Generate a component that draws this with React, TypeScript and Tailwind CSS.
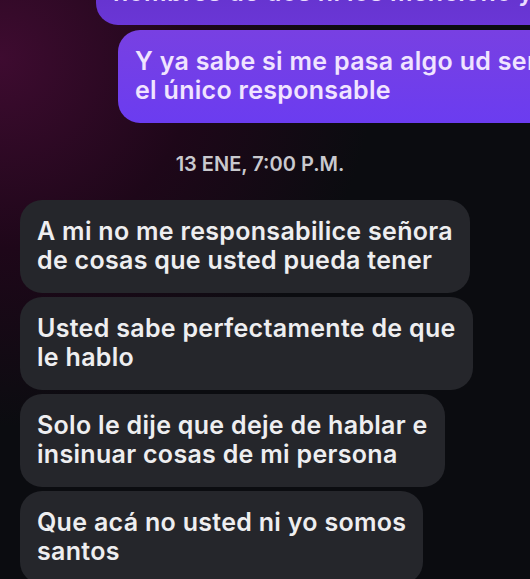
import React from 'react';

const received = [
  { lines: ['A mi no me responsabilice señora', 'de cosas que usted pueda tener'] },
  { lines: ['Usted sabe perfectamente de que', 'le hablo'] },
  { lines: ['Solo le dije que deje de hablar e', 'insinuar cosas de mi persona'] },
  { lines: ['Que acá no usted ni yo somos', 'santos'] },
];

const Lines = ({ lines }: { lines: string[] }) => (
  <>
    {lines.map((line, i) => (
      <React.Fragment key={i}>
        {line}
        {i < lines.length - 1 && <br />}
      </React.Fragment>
    ))}
  </>
);

const App = () => {
  return (
    <div
      className="h-[579px] w-[530px] overflow-hidden bg-[#0b0c10] bg-[radial-gradient(ellipse_at_0%_10%,#3e0b30_0%,#1e0719_26%,#0b0c10_50%)] font-['Inter','Liberation_Sans',sans-serif]"
    >
      <div className="flex flex-col">
        {/* sent messages */}
        <div className="ml-[96px] mt-[-68px] h-[93px] w-[480px] shrink-0 rounded-[22px] bg-gradient-to-b from-[#5e2fc0] to-[#6a36d6] px-[17px] py-[17px] text-[25px] font-semibold leading-[29px] tracking-[0.3px] text-[#eadcff] whitespace-nowrap">
          Mis hijos no tienen nada que ver y los
          <br />
          nombres de dos ni los menciono y
        </div>
        <div className="ml-[118px] mt-[5px] h-[93px] w-[460px] shrink-0 rounded-[22px] bg-gradient-to-b from-[#7840e2] to-[#6b3cf0] px-[17px] py-[17px] text-[25px] font-semibold leading-[29px] tracking-[0.3px] text-[#f0e4ff] whitespace-nowrap">
          Y ya sabe si me pasa algo ud ser
          <br />
          el único responsable
        </div>

        <div className="mt-[29px] pr-[10px] text-center text-[20px] font-semibold leading-[24px] text-[#c9c9ce]">
          13 ENE, 7:00 P.M.
        </div>

        {/* received messages */}
        <div className="mt-[24px] flex flex-col items-start gap-1 pl-[20px]">
          {received.map((m, i) => (
            <div
              key={i}
              className="h-[93px] shrink-0 rounded-[22px] bg-[#25262b] px-[17px] py-[17px] text-[25px] font-semibold leading-[29px] tracking-[0.3px] text-[#eeeef0] whitespace-nowrap"
            >
              <Lines lines={m.lines} />
            </div>
          ))}
        </div>
      </div>
    </div>
  );
};

export default App;
